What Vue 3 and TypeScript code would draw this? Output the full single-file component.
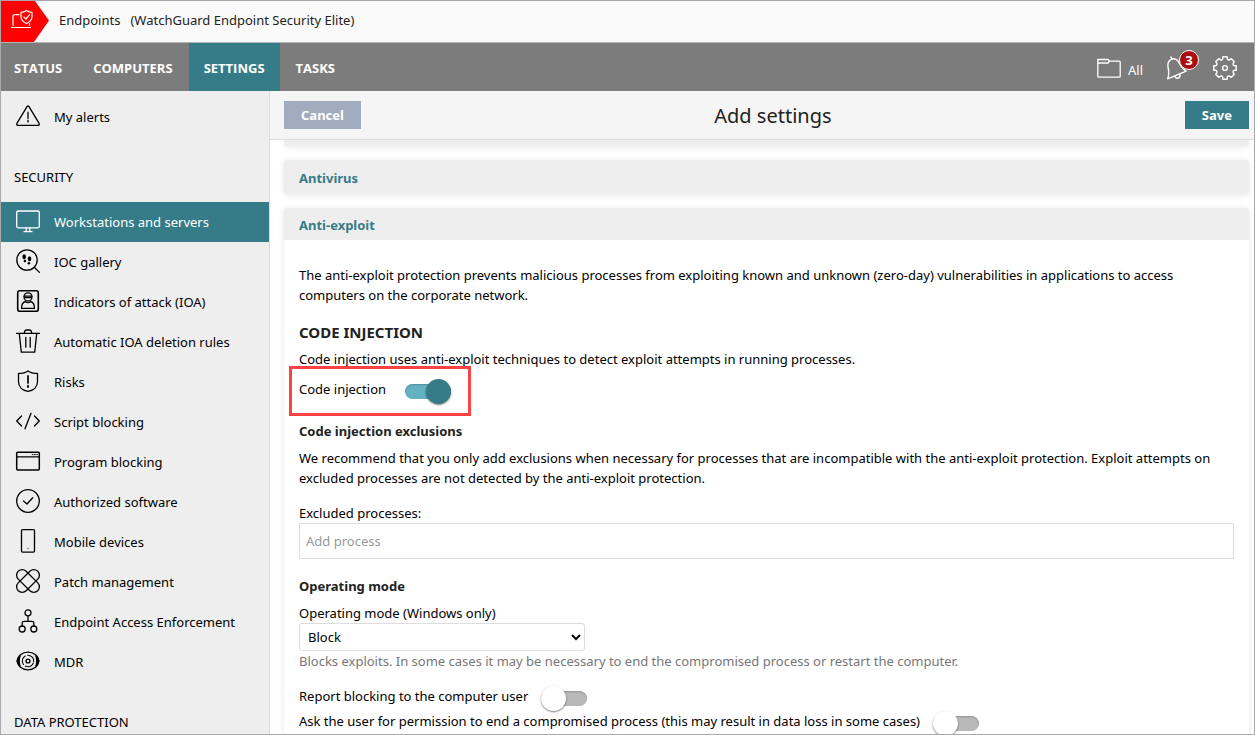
<script setup lang="ts">
import { ref } from 'vue'

interface NavItem {
  label: string
  icon: string
}

const tabs: string[] = ['STATUS', 'COMPUTERS', 'SETTINGS', 'TASKS']
const activeTab = ref('SETTINGS')

const securityItems: NavItem[] = [
  { label: 'Workstations and servers', icon: 'monitor' },
  { label: 'IOC gallery', icon: 'ioc' },
  { label: 'Indicators of attack (IOA)', icon: 'ioa' },
  { label: 'Automatic IOA deletion rules', icon: 'trash' },
  { label: 'Risks', icon: 'shield' },
  { label: 'Script blocking', icon: 'code' },
  { label: 'Program blocking', icon: 'window' },
  { label: 'Authorized software', icon: 'check' },
  { label: 'Mobile devices', icon: 'phone' },
  { label: 'Patch management', icon: 'patch' },
  { label: 'Endpoint Access Enforcement', icon: 'nodes' },
  { label: 'MDR', icon: 'eye' },
]
const activeItem = ref('Workstations and servers')

const codeInjection = ref(true)
const reportBlocking = ref(false)
const askUser = ref(false)
const mode = ref('Block')
const processName = ref('')
</script>

<template>
  <div class="frame">
    <header class="brand">
      <svg class="brand-mark" viewBox="0 0 48 41" aria-hidden="true">
        <path d="M0 0H34L48 19.500L33 41H0Z" fill="#ff0000" />
        <g fill="none" stroke="#fff" stroke-width="1.2" stroke-linecap="round" stroke-linejoin="round">
          <path d="M18 13.600H13.500Q12 13.600 12 15V24.500" />
          <path d="M28.500 24.500V22.500" />
          <path d="M10.500 26.500H29.500" />
          <path d="M25.500 9.500Q28 11.300 31 11.300V15.500Q31 20 25.500 22.500Q20 20 20 15.500V11.300Q23 11.300 25.500 9.500Z" />
          <path d="M22.800 15.800L25 18L28.600 13.600" />
        </g>
      </svg>
      <div class="brand-text">
        <span>Endpoints</span>
        <span>(WatchGuard Endpoint Security Elite)</span>
      </div>
    </header>

    <nav class="topnav" aria-label="Main">
      <a
        v-for="tab in tabs"
        :key="tab"
        href="#"
        class="tab"
        :class="{ active: tab === activeTab }"
        @click.prevent="activeTab = tab"
      >{{ tab }}</a>
      <div class="tools">
        <button type="button" class="tool">
          <svg width="24" height="24" viewBox="0 0 24 24" fill="none" stroke="#fff" stroke-width="1.3" stroke-linejoin="round" aria-hidden="true">
            <path d="M.8 20.200V3.500H11.300L12.300 5.200H22.200Q23.200 5.200 23.200 6.200V20.200Q23.200 21.200 22.200 21.200H1.800Q.8 21.200 .8 20.200Z" />
            <path d="M1 7H11L12.500 5.200" />
          </svg>
          <span class="tool-text">All</span>
        </button>
        <button type="button" class="tool" aria-label="Notifications">
          <svg width="24" height="24" viewBox="0 0 24 24" fill="none" stroke="#fff" stroke-width="1.400" stroke-linecap="round" stroke-linejoin="round" aria-hidden="true">
            <path d="M5.500 3.200C2 5 1.300 8.500 2.300 12.500C3 16 3 19 1.700 22.800L20.200 15.200C17 13.500 15.500 11.500 14 8.500C12.300 4.600 9.500 1.800 5.500 3.200Z" />
            <path d="M6 3L5 .9" />
            <path d="M9 20.500C10.200 23.500 14.500 22.400 14 18.500" />
          </svg>
          <span class="badge">3</span>
        </button>
        <button type="button" class="tool" aria-label="Preferences">
          <svg width="24" height="24" viewBox="0 0 24 24" fill="none" stroke="#fff" stroke-width="1.400" stroke-linejoin="round" aria-hidden="true">
            <path d="M9.800 .8H14.200V2.500Q14.800 4.400 16.600 3.800L18.300 2.700L21.300 5.700L20.200 7.400Q19.600 9.200 21.500 9.800H23.200V14.200H21.500Q19.600 14.800 20.200 16.600L21.300 18.300L18.300 21.300L16.600 20.200Q14.800 19.600 14.200 21.500V23.200H9.800V21.500Q9.200 19.600 7.400 20.200L5.700 21.300L2.700 18.300L3.800 16.600Q4.400 14.800 2.500 14.200H.8V9.800H2.500Q4.400 9.200 3.800 7.400L2.700 5.700L5.700 2.700L7.400 3.800Q9.200 4.400 9.800 2.500Z" />
            <circle cx="12" cy="12" r="2.400" />
          </svg>
        </button>
      </div>
    </nav>

    <div class="columns">
      <aside class="sidebar">
        <a href="#" class="item" @click.prevent>
          <svg class="icon" viewBox="0 0 24 24" aria-hidden="true">
            <path d="M11 2.700Q12 1.300 13 2.700L23.100 19.400Q23.800 21.300 22 21.300H2Q.2 21.300 .9 19.400Z" />
            <path d="M12 8.200V14.500M12 16.300V18" />
          </svg>
          <span>My alerts</span>
        </a>
        <h2 class="group">SECURITY</h2>
        <a
          v-for="item in securityItems"
          :key="item.label"
          href="#"
          class="item"
          :class="{ active: item.label === activeItem }"
          @click.prevent="activeItem = item.label"
        >
          <svg class="icon" viewBox="0 0 24 24" aria-hidden="true">
            <g v-if="item.icon === 'monitor'">
              <rect x=".7" y="2" width="22.600" height="16.800" rx="1.500" />
              <path d="M10.200 19V22.500M13.800 19V22.500M8 22.700H16" />
            </g>
            <g v-else-if="item.icon === 'ioc'">
              <circle cx="11" cy="11" r="10.200" />
              <path d="M18.300 18.300L23.400 23.400" />
              <g class="solid">
                <ellipse cx="8.200" cy="7.800" rx="1.800" ry="2.500" />
                <ellipse cx="8.900" cy="12" rx="1.300" ry="1.200" />
                <ellipse cx="13.500" cy="9.800" rx="1.800" ry="2.500" />
                <ellipse cx="12.900" cy="14.200" rx="1.300" ry="1.200" />
              </g>
            </g>
            <g v-else-if="item.icon === 'ioa'">
              <rect x="1.700" y="1.700" width="20.600" height="20.600" rx="2" stroke-width="1.600" />
              <circle cx="12" cy="7.900" r="4" />
              <path d="M8.200 7.200H15.800M8.700 8.600H15.300" stroke-width="1.300" />
              <path d="M9.400 12.500C6.500 13.300 5.500 15.500 5.500 19.400H18.500C18.500 15.500 17.500 13.300 14.600 12.500C13.500 14 10.500 14 9.400 12.500Z" />
            </g>
            <g v-else-if="item.icon === 'trash'">
              <path d="M.5 4.300H23.500M3.300 4.600L5.300 23.200H18.700L20.700 4.600M8.300 4C8.500 2 9.500 1 10.500 1H13.500C14.500 1 15.500 2 15.700 4M9.800 8.500V18.200M14.200 8.500V18.200" />
            </g>
            <g v-else-if="item.icon === 'shield'">
              <path d="M12 1.900C14.500 3.800 18 4.300 21.500 4.300V12.500C21.500 18 17.500 21.500 12 22.300C6.500 21.500 2.500 18 2.500 12.500V4.300C6 4.300 9.500 3.800 12 1.900Z" />
              <path d="M12 6.900V14M12 16.500V18.200" stroke-width="1.700" />
            </g>
            <g v-else-if="item.icon === 'code'">
              <path d="M5.500 7L.7 12L5.500 17M18.500 7L23.300 12L18.500 17M15 4.300L9 19.800" />
            </g>
            <g v-else-if="item.icon === 'window'">
              <rect x=".7" y="3.300" width="22.600" height="17.800" rx="1" stroke-width="1.500" />
              <path d="M1 7.800H23" />
              <path d="M16.200 5.600H17.200M18.400 5.600H19.400M20.600 5.600H21.400" stroke-width=".9" />
            </g>
            <g v-else-if="item.icon === 'check'">
              <circle cx="12" cy="12" r="11.300" />
              <path d="M7.500 11.900L11 15L16.700 8.800" />
            </g>
            <g v-else-if="item.icon === 'phone'">
              <rect x="5.500" y=".7" width="13" height="22.400" rx="1" />
              <path d="M11.500 19.500H12.500" stroke="#999" />
            </g>
            <g v-else-if="item.icon === 'patch'">
              <rect x="-1.800" y="6.400" width="27.600" height="11.200" rx="5.600" transform="rotate(45 12 12)" />
              <rect x="-1.800" y="6.400" width="27.600" height="11.200" rx="5.600" transform="rotate(-45 12 12)" />
            </g>
            <g v-else-if="item.icon === 'nodes'">
              <circle cx="12" cy="3.800" r="3" />
              <circle cx="6.200" cy="20" r="3" />
              <circle cx="17.800" cy="20" r="3" />
              <path d="M12 6.800V12.300M6.200 17V14Q6.200 12.300 8 12.300H16Q17.800 12.300 17.800 14V17" />
            </g>
            <g v-else>
              <path class="solid" d="M.2 12Q1.500 8.500 5 6Q2.800 12 5 18Q1.500 15.500 .2 12ZM23.800 12Q22.500 8.500 19 6Q21.200 12 19 18Q22.500 15.500 23.800 12Z" />
              <ellipse cx="12" cy="12" rx="10.600" ry="8.900" />
              <circle cx="12" cy="12" r="5.700" stroke-width="1.100" stroke-dasharray="9.500 2.440" transform="rotate(20 12 12)" />
              <circle cx="12" cy="12" r="1.900" stroke-width="1.400" />
            </g>
          </svg>
          <span>{{ item.label }}</span>
        </a>
        <h2 class="group">DATA PROTECTION</h2>
      </aside>

      <main class="main">
        <div class="toolbar">
          <button type="button" class="btn cancel">Cancel</button>
          <h1>Add settings</h1>
          <button type="button" class="btn save">Save</button>
        </div>

        <div class="panels">
          <section class="panel sliver"></section>
          <section class="panel">
            <button type="button" class="panel-head closed">Antivirus</button>
          </section>
          <section class="panel">
            <button type="button" class="panel-head">Anti-exploit</button>
            <div class="panel-body">
              <p>The anti-exploit protection prevents malicious processes from exploiting known and unknown (zero-day) vulnerabilities in applications to access computers on the corporate network.</p>
              <h2>CODE INJECTION</h2>
              <p>Code injection uses anti-exploit techniques to detect exploit attempts in running processes.</p>
              <div class="switch-row highlighted">
                <label for="code-injection">Code injection</label>
                <input id="code-injection" v-model="codeInjection" type="checkbox" class="switch" />
              </div>
              <h3>Code injection exclusions</h3>
              <p>We recommend that you only add exclusions when necessary for processes that are incompatible with the anti-exploit protection. Exploit attempts on excluded processes are not detected by the anti-exploit protection.</p>
              <div class="field spaced">
                <label for="excluded">Excluded processes:</label>
                <input id="excluded" v-model="processName" type="text" class="text" placeholder="Add process" />
              </div>
              <h3>Operating mode</h3>
              <div class="field">
                <label for="mode">Operating mode (Windows only)</label>
                <select id="mode" v-model="mode">
                  <option>Block</option>
                </select>
                <span class="hint">Blocks exploits. In some cases it may be necessary to end the compromised process or restart the computer.</span>
              </div>
              <div class="switches">
                <div class="switch-row">
                  <label for="report">Report blocking to the computer user</label>
                  <input id="report" v-model="reportBlocking" type="checkbox" class="switch" />
                </div>
                <div class="switch-row">
                  <label for="ask">Ask the user for permission to end a compromised process (this may result in data loss in some cases)</label>
                  <input id="ask" v-model="askUser" type="checkbox" class="switch" />
                </div>
              </div>
            </div>
          </section>
        </div>
      </main>
    </div>
  </div>
</template>

<style>
body {
  margin: 0;
}
</style>

<style scoped>
.frame,
.frame * {
  box-sizing: border-box;
}

.frame {
  display: flex;
  flex-direction: column;
  height: 100vh;
  overflow: hidden;
  border: 1px solid #a9a9a9;
  background: #fff;
  color: #000;
  font: 13px/20px "Noto Sans", "Open Sans", sans-serif;
}

button,
input,
select {
  font: inherit;
}

a {
  color: inherit;
  text-decoration: none;
}

button {
  border: 0;
  cursor: pointer;
}

h1,
h2,
h3,
p {
  margin: 0;
}

.brand {
  display: flex;
  flex: none;
  gap: 10px;
  border-bottom: 1px solid #b4b4b4;
  background: #fafafa;
  color: #222;
}

.brand-mark {
  display: block;
  width: 48px;
  height: 41px;
}

.brand-text {
  display: flex;
  gap: 10px;
  padding-top: 9px;
}

.topnav {
  display: flex;
  flex: none;
  gap: 1px;
  height: 48px;
  background: #7c7c7c;
  color: #fff;
}

.tab {
  display: flex;
  align-items: center;
  padding: 2px 15px 0;
  font-family: "Open Sans", "Noto Sans", sans-serif;
  font-weight: 700;
}

.tab:first-child {
  padding-left: 13px;
}

.tab.active {
  background: #367c88;
}

.tools {
  display: flex;
  align-items: center;
  gap: 23px;
  margin-left: auto;
  padding: 2px 17px 0 0;
}

.tool {
  position: relative;
  display: flex;
  align-items: center;
  gap: 7px;
  padding: 0;
  background: none;
  color: #fff;
}

.tool svg {
  display: block;
}

.tool-text {
  padding-top: 4px;
}

.badge {
  position: absolute;
  top: -6px;
  right: -9px;
  width: 20px;
  height: 20px;
  border: 1px solid #fff;
  border-radius: 50%;
  background: #a90e13;
  font-weight: 700;
  line-height: 18px;
  text-align: center;
}

.columns {
  display: flex;
  flex: 1;
  min-height: 0;
}

.sidebar {
  flex: none;
  width: 269px;
  padding-top: 6px;
  overflow: hidden;
  border-right: 1px solid #ddd;
  background: #eee;
}

.item {
  display: flex;
  align-items: center;
  gap: 14px;
  height: 40px;
  padding-left: 15px;
}

.item.active {
  background: #367c88;
  color: #fff;
}

.icon {
  flex: none;
  width: 24px;
  height: 24px;
  margin-bottom: 2px;
  overflow: visible;
  fill: none;
  stroke: currentColor;
  stroke-width: 1.3;
  stroke-linecap: round;
  stroke-linejoin: round;
}

.solid {
  fill: currentColor;
  stroke: none;
}

.group {
  padding: 30px 13px 15px;
  font-size: 13px;
  font-weight: 400;
}

.main {
  display: flex;
  flex: 1;
  flex-direction: column;
  min-width: 0;
  overflow: hidden;
}

.toolbar {
  display: flex;
  align-items: center;
  justify-content: space-between;
  flex: none;
  height: 49px;
  padding: 0 5px 0 14px;
  border-bottom: 1px solid #ddd;
  background: #f5f5f5;
}

.toolbar h1 {
  padding-top: 2px;
  color: #222;
  font-size: 20px;
  font-weight: 400;
  line-height: 28px;
}

.btn {
  height: 28px;
  padding: 0 17px;
  color: #fff;
  font-weight: 700;
}

.cancel {
  background: #a1adbe;
}

.save {
  background: #367c88;
}

.panels {
  display: flex;
  flex: 1;
  flex-direction: column;
  gap: 14px;
  min-height: 0;
  padding: 0 5px 0 14px;
  overflow: hidden;
}

.panel {
  flex: none;
  border-radius: 3px;
  background: #fff;
  box-shadow: 0 1px 6px rgba(0, 0, 0, 0.1);
}

.sliver {
  height: 6px;
  border-radius: 0 0 3px 3px;
  background: #eee;
}

.panel-head {
  display: block;
  width: 100%;
  height: 32px;
  padding: 2px 15px 0;
  border-radius: 3px 3px 0 0;
  background: #eee;
  color: #367c88;
  font-weight: 700;
  text-align: left;
}

.panel-head.closed {
  height: 34px;
  border-radius: 3px;
}

.panel-body {
  padding: 25px 15px;
}

.panel-body h2 {
  margin: 15px 0 5px;
  color: #222;
  font-size: 15px;
  font-weight: 700;
  line-height: 24px;
}

.panel-body h3 {
  margin: 17px 0 7px;
  color: #222;
  font-size: 13px;
  font-weight: 700;
}

.field {
  display: flex;
  flex-direction: column;
  align-items: flex-start;
}

.spaced {
  margin-top: 15px;
}

.text {
  width: 100%;
  height: 36px;
  padding: 0 6px;
  border: 1px solid #ddd;
  background: #fff;
}

.text::placeholder {
  color: #999;
  opacity: 1;
}

select {
  width: 286px;
  max-width: 100%;
  height: 28px;
  padding: 0 4px;
  border: 1px solid #ddd;
  border-radius: 3px;
  background: #fff;
  color: #000;
}

.hint {
  color: #777;
}

.switches {
  margin-top: 15px;
}

.switch-row {
  position: relative;
  display: flex;
  align-items: flex-start;
  gap: 13px;
  width: fit-content;
}

.highlighted {
  gap: 19px;
  margin-top: 10px;
}

.highlighted::after {
  position: absolute;
  inset: -13px -20px -12px -10px;
  border: 3px solid #fc4343;
  content: "";
  pointer-events: none;
}

.switch {
  display: grid;
  align-items: center;
  flex: none;
  width: 46px;
  height: 25px;
  margin: 0;
  appearance: none;
  cursor: pointer;
}

.switch::before,
.switch::after {
  grid-area: 1 / 1;
  content: "";
}

.switch::before {
  height: 15px;
  border-radius: 8px;
  background: #b9b9b9;
  box-shadow: inset 0 1px 2px rgba(0, 0, 0, 0.2);
}

.switch::after {
  width: 25px;
  height: 25px;
  border-radius: 50%;
  background: #fff;
  box-shadow: 0 1px 2px rgba(0, 0, 0, 0.5);
}

.switch:checked::before {
  background: #64b1c1;
}

.switch:checked::after {
  justify-self: end;
  background: #367c88;
}
</style>
